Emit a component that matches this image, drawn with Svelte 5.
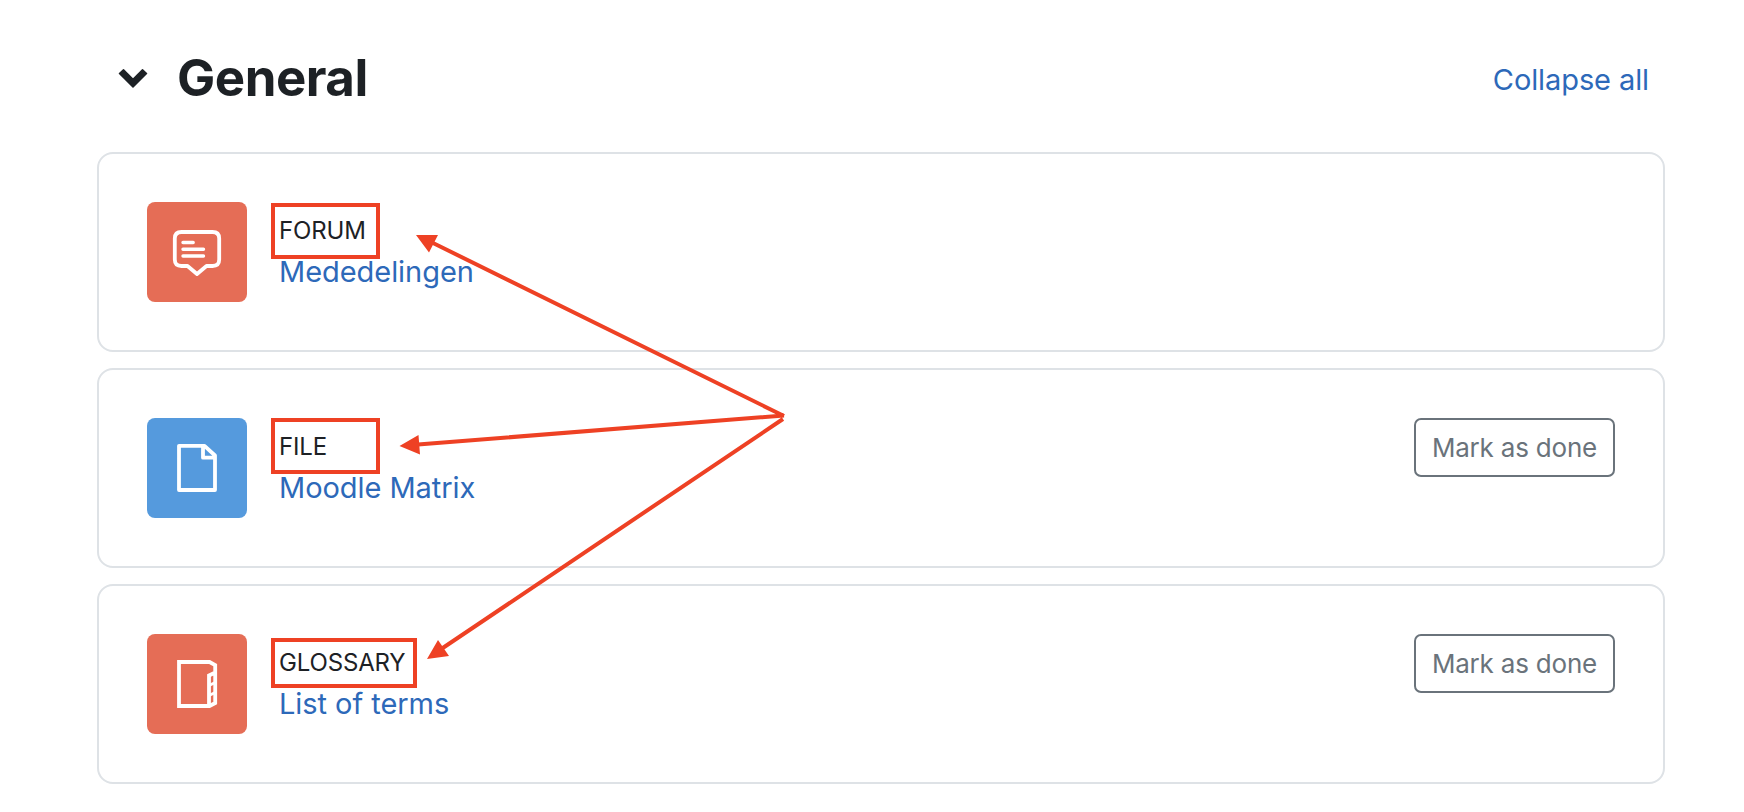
<script lang="ts">
  type Activity = {
    type: string;
    name: string;
    icon: string;
    color: string;
    completion: boolean;
  };

  const activities: Activity[] = [
    {type: "Forum", name: "Mededelingen", icon: "forum", color: "collaboration", completion: false},
    {type: "File", name: "Moodle Matrix", icon: "file", color: "content", completion: true},
    {type: "Glossary", name: "List of terms", icon: "glossary", color: "collaboration", completion: true},
  ];
</script>

<style>
  :global(body) {
    margin: 0;
    background-color: rgb(255, 255, 255);
  }

  .section {
    box-sizing: border-box;
    height: 812px;
    padding: 44px 79px 0 97px;
    font-family: Inter, "Liberation Sans", sans-serif;
    color: rgb(29, 33, 37);
  }

  .section__header {
    display: flex;
    align-items: center;
    height: 68px;
    margin-bottom: 40px;
    padding: 0 16px 0 21px;
  }

  .section__chevron {
    flex: none;
    width: 30px;
    height: 20px;
    fill: rgb(29, 33, 37);
    stroke: rgb(29, 33, 37);
    stroke-width: 1.5;
    stroke-linejoin: round;
  }

  .section__title {
    margin: 0 auto 0 29px;
    font-size: 51px;
    line-height: 68px;
    font-weight: 700;
    letter-spacing: -0.5px;
  }

  a {
    color: rgb(45, 105, 185);
    text-decoration: none;
  }

  .section__collapse {
    padding-top: 2px;
    font-size: 29px;
    letter-spacing: -0.1px;
  }

  .activities {
    display: flex;
    flex-direction: column;
    gap: 16px;
    margin: 0;
    padding: 0;
    list-style: none;
  }

  .activity {
    display: flex;
    align-items: flex-start;
    box-sizing: border-box;
    height: 200px;
    padding: 48px;
    border: 2px solid rgb(222, 226, 230);
    border-radius: 16px;
  }

  .activity__icon {
    flex: none;
    width: 100px;
    height: 100px;
    border-radius: 8px;
  }

  .activity__icon svg {
    display: block;
    width: 100px;
    height: 100px;
    fill: none;
    stroke: rgb(255, 255, 255);
    stroke-width: 3.8;
    stroke-linejoin: round;
    stroke-linecap: round;
  }

  .collaboration {
    background-color: rgb(229, 109, 86);
  }

  .content {
    background-color: rgb(85, 154, 221);
  }

  .activity__text {
    flex: 1;
    padding: 10px 0 0 32px;
  }

  .activity__type {
    font-size: 24px;
    line-height: 38px;
    letter-spacing: -0.15px;
    text-transform: uppercase;
  }

  .activity__name {
    font-size: 29px;
    line-height: 44px;
    letter-spacing: -0.05px;
  }

  .activity__done {
    box-sizing: border-box;
    width: 201px;
    height: 59px;
    padding: 0;
    border: 2px solid rgb(106, 115, 123);
    border-radius: 7px;
    background: none;
    font: inherit;
    font-size: 26px;
    letter-spacing: -0.2px;
    color: rgb(106, 115, 123);
  }

  .marks {
    position: absolute;
    top: 0;
    left: 0;
    width: 1744px;
    height: 812px;
    pointer-events: none;
    fill: none;
    stroke: rgb(238, 65, 36);
    stroke-width: 4;
  }

  .marks__head {
    fill: rgb(238, 65, 36);
    stroke: none;
  }
</style>

<section class="section">
  <header class="section__header">
    <svg class="section__chevron" viewBox="0 0 30 20">
      <path d="M15 19 1.500 5.500 5.500 1.700 15 11.200 24.500 1.700 28.500 5.500Z" />
    </svg>
    <h3 class="section__title">General</h3>
    <a class="section__collapse" href="#collapse">Collapse all</a>
  </header>

  <ul class="activities">
    {#each activities as activity}
      <li class="activity">
        <div class="activity__icon {activity.color}">
          <svg viewBox="0 0 100 100">
            {#if activity.icon === "forum"}
              <path d="M34.500 30H65.500Q72.200 30 72.200 36.500V57.500Q72.200 64 65.500 64H59.500L50 72 40.500 64H34.500Q27.800 64 27.800 57.500V36.500Q27.800 30 34.500 30Z" />
              <path d="M36 40.500H46.200M36 47.300H56.500M36 54H56.500" stroke-width="3.400" />
            {:else if activity.icon === "file"}
              <path d="M32 27.800H57.500L68 37.500V72H32ZM56 28V39.700H68" />
            {:else}
              <path d="M68.200 39V31.200L62.500 28H32V72H62.500L68.200 69V38.500L62 41.500V72" stroke-linejoin="miter" />
              <path d="M68.200 48.500 62 51.500M68.200 58.500 62 61.500" stroke-linecap="butt" stroke-width="3" />
            {/if}
          </svg>
        </div>
        <div class="activity__text">
          <div class="activity__type">{activity.type}</div>
          <a class="activity__name" href="#{activity.icon}">{activity.name}</a>
        </div>
        {#if activity.completion}
          <button class="activity__done">Mark as done</button>
        {/if}
      </li>
    {/each}
  </ul>
</section>

<!-- annotations drawn over the list -->
<svg class="marks" viewBox="0 0 1744 812">
  <rect x="273" y="205" width="105" height="52" />
  <rect x="273" y="420" width="105" height="52" />
  <rect x="273" y="640" width="142" height="46" />
  <path d="M432 242.500 784 416M418 444.500 784 415.500M442 648.500 783 419" />
  <path class="marks__head" d="M416 235H438L429 252.500ZM399.500 446 418.500 435 420 454.500ZM427 659 438 640 449 656Z" />
</svg>
